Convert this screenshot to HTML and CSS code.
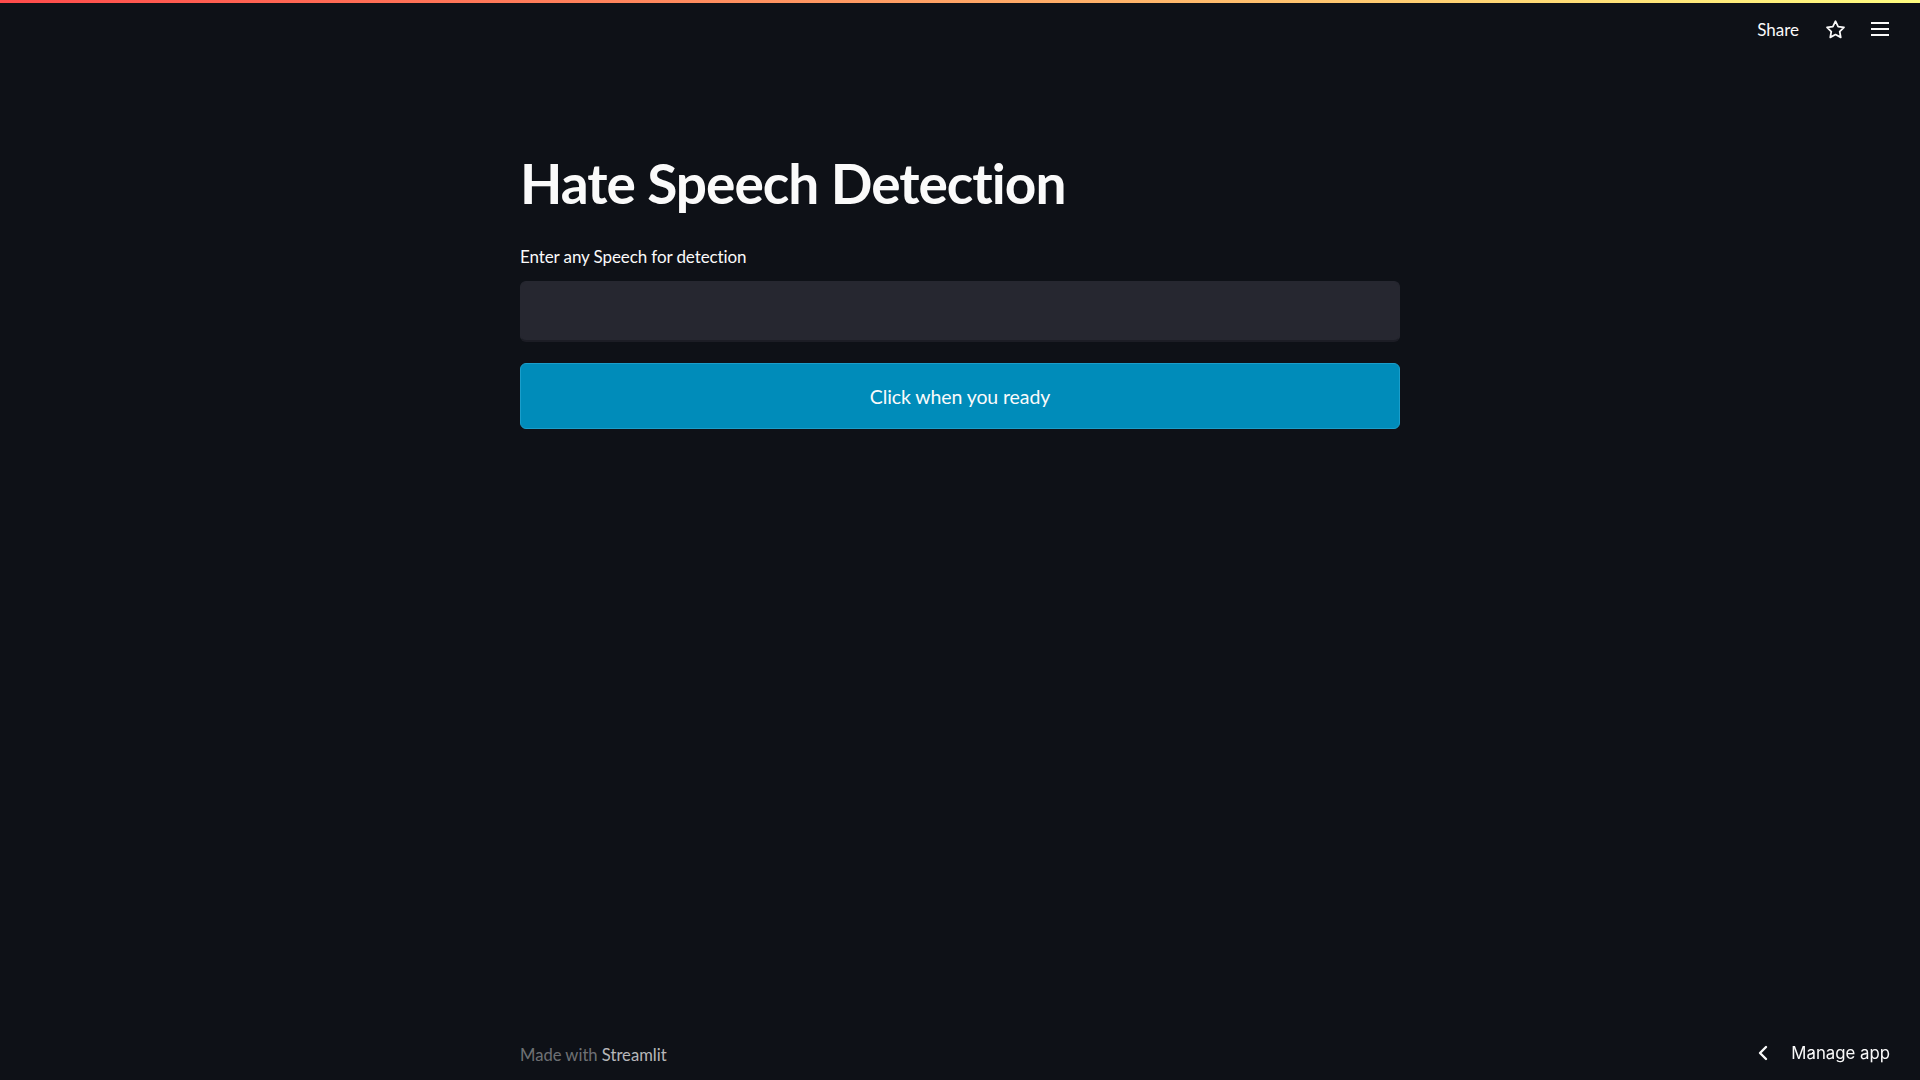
FILE: index.html
```html
<!DOCTYPE html>
<html lang="en">
<head>
<meta charset="utf-8">
<title>Hate Speech Detection</title>
<link rel="stylesheet" href="styles.css">
</head>
<body>
<div class="decoration"></div>
<header class="toolbar">
  <span class="share">Share</span>
  <svg class="icon star" viewBox="0 0 24 24" width="21" height="21" fill="none" stroke="#fafafa" stroke-width="2" stroke-linejoin="round"><polygon points="12 2.5 15 8.6 21.7 9.6 16.8 14.3 18 21 12 17.8 6 21 7.2 14.3 2.3 9.6 9 8.6"/></svg>
  <svg class="icon menu" viewBox="0 0 20 20" width="20" height="20" fill="#fafafa"><rect x="1" y="3" width="18" height="2"/><rect x="1" y="9" width="18" height="2"/><rect x="1" y="15" width="18" height="2"/></svg>
</header>
<main class="main">
  <h1 class="title">Hate Speech Detection</h1>
  <label class="label" for="speech">Enter any Speech for detection</label>
  <div class="input-wrap"><input id="speech" class="input" type="text"></div>
  <button class="btn">Click when you ready</button>
</main>
<footer class="footer">
  <div class="made">Made with <span class="brand">Streamlit</span></div>
</footer>
<div class="manage">
  <svg viewBox="0 0 10 16" width="10" height="16" fill="none" stroke="#fafafa" stroke-width="2.4" stroke-linecap="round" stroke-linejoin="round"><polyline points="8 2 2 8 8 14"/></svg>
  <span>Manage app</span>
</div>
</body>
</html>
```
FILE: styles.css
```css
html, body {
  margin: 0;
  padding: 0;
  height: 100%;
}
body {
  background: #0e1117;
  color: #fafafa;
  font-family: "Lato", "Open Sans", sans-serif;
  display: flex;
  flex-direction: column;
  overflow: hidden;
}
.decoration {
  height: 3px;
  background: linear-gradient(90deg, rgb(255, 75, 75), rgb(255, 253, 128));
  flex: none;
}
.toolbar {
  display: flex;
  align-items: center;
  justify-content: flex-end;
  height: 52px;
  padding-right: 30px;
}
.share {
  font-size: 17px;
  margin-right: 26px;
}
.icon.star {
  margin-right: 24px;
}
.main {
  width: 880px;
  margin: 0 auto;
  display: flex;
  flex-direction: column;
  flex: 1;
}
.title {
  margin: 95px 0 0 0;
  font-size: 55px;
  font-weight: 700;
  line-height: 66px;
  letter-spacing: -1px;
}
.label {
  margin-top: 27px;
  font-size: 17px;
  line-height: 28px;
  letter-spacing: -0.1px;
}
.input-wrap {
  margin-top: 10px;
}
.input {
  box-sizing: border-box;
  display: block;
  width: 100%;
  height: 61px;
  background: #262730;
  border: 1px solid #262730;
  border-bottom: 2px solid #1c1d25;
  border-radius: 6px;
  outline: none;
  color: #fafafa;
  font-size: 20px;
  padding: 0 16px;
  font-family: inherit;
}
.btn {
  margin-top: 21px;
  height: 66px;
  width: 100%;
  background: #008cba;
  border: 1px solid #1b9ecb;
  border-radius: 6px;
  color: #fafafa;
  font-family: inherit;
  font-size: 19.5px;
  letter-spacing: -0.1px;
  cursor: pointer;
}
.footer {
  width: 880px;
  margin: 0 auto;
  height: 35px;
}
.made {
  font-size: 16.6px;
  color: rgba(250, 250, 250, 0.42);
}
.brand {
  color: rgba(250, 250, 250, 0.72);
}
.manage {
  position: fixed;
  right: 30px;
  bottom: 17px;
  display: flex;
  align-items: center;
  gap: 23px;
  font-family: "Inter", "Lato", sans-serif;
  font-size: 16.8px;
  color: #fafafa;
}
```
